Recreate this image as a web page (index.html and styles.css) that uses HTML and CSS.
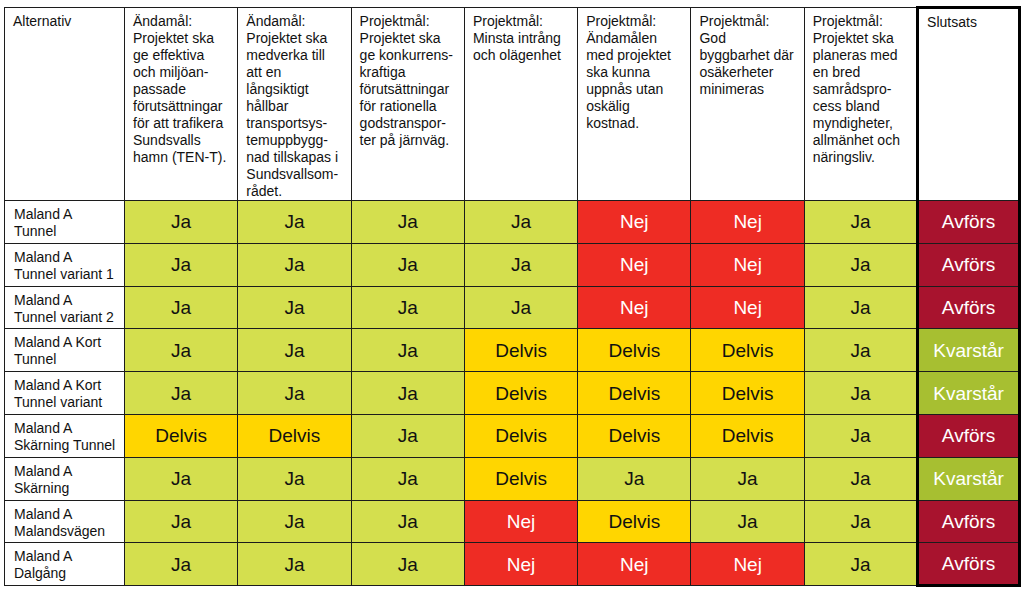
FILE: index.html
```html
<!DOCTYPE html>
<html lang="sv">
<head>
<meta charset="utf-8">
<title>Alternativ</title>
<link rel="stylesheet" href="styles.css">
</head>
<body>
<table class="grid">
  <colgroup>
    <col class="c-alt"><col class="c-m"><col class="c-m"><col class="c-m"><col class="c-m"><col class="c-m"><col class="c-m"><col class="c-m"><col class="c-end">
  </colgroup>
  <tr class="head">
    <th>Alternativ</th>
    <th>Ändamål:<br>Projektet ska<br>ge effektiva<br>och miljöan-<br>passade<br>förutsättningar<br>för att trafikera<br>Sundsvalls<br>hamn (TEN-T).</th>
    <th>Ändamål:<br>Projektet ska<br>medverka till<br>att en<br>långsiktigt<br>hållbar<br>transportsys-<br>temuppbygg-<br>nad tillskapas i<br>Sundsvallsom-<br>rådet.</th>
    <th>Projektmål:<br>Projektet ska<br>ge konkurrens-<br>kraftiga<br>förutsättningar<br>för rationella<br>godstranspor-<br>ter på järnväg.</th>
    <th>Projektmål:<br>Minsta intrång<br>och olägenhet</th>
    <th>Projektmål:<br>Ändamålen<br>med projektet<br>ska kunna<br>uppnås utan<br>oskälig<br>kostnad.</th>
    <th>Projektmål:<br>God<br>byggbarhet där<br>osäkerheter<br>minimeras</th>
    <th>Projektmål:<br>Projektet ska<br>planeras med<br>en bred<br>samrådspro-<br>cess bland<br>myndigheter,<br>allmänhet och<br>näringsliv.</th>
    <th class="end">Slutsats</th>
  </tr>
  <tr>
    <td class="lbl">Maland A<br>Tunnel</td>
    <td class="ja">Ja</td><td class="ja">Ja</td><td class="ja">Ja</td><td class="ja">Ja</td><td class="nej">Nej</td><td class="nej">Nej</td><td class="ja">Ja</td><td class="end avf">Avförs</td>
  </tr>
  <tr>
    <td class="lbl">Maland A<br>Tunnel variant 1</td>
    <td class="ja">Ja</td><td class="ja">Ja</td><td class="ja">Ja</td><td class="ja">Ja</td><td class="nej">Nej</td><td class="nej">Nej</td><td class="ja">Ja</td><td class="end avf">Avförs</td>
  </tr>
  <tr>
    <td class="lbl">Maland A<br>Tunnel variant 2</td>
    <td class="ja">Ja</td><td class="ja">Ja</td><td class="ja">Ja</td><td class="ja">Ja</td><td class="nej">Nej</td><td class="nej">Nej</td><td class="ja">Ja</td><td class="end avf">Avförs</td>
  </tr>
  <tr>
    <td class="lbl">Maland A Kort<br>Tunnel</td>
    <td class="ja">Ja</td><td class="ja">Ja</td><td class="ja">Ja</td><td class="del">Delvis</td><td class="del">Delvis</td><td class="del">Delvis</td><td class="ja">Ja</td><td class="end kv">Kvarstår</td>
  </tr>
  <tr>
    <td class="lbl">Maland A Kort<br>Tunnel variant</td>
    <td class="ja">Ja</td><td class="ja">Ja</td><td class="ja">Ja</td><td class="del">Delvis</td><td class="del">Delvis</td><td class="del">Delvis</td><td class="ja">Ja</td><td class="end kv">Kvarstår</td>
  </tr>
  <tr>
    <td class="lbl">Maland A<br>Skärning Tunnel</td>
    <td class="del">Delvis</td><td class="del">Delvis</td><td class="ja">Ja</td><td class="del">Delvis</td><td class="del">Delvis</td><td class="del">Delvis</td><td class="ja">Ja</td><td class="end avf">Avförs</td>
  </tr>
  <tr>
    <td class="lbl">Maland A<br>Skärning</td>
    <td class="ja">Ja</td><td class="ja">Ja</td><td class="ja">Ja</td><td class="del">Delvis</td><td class="ja">Ja</td><td class="ja">Ja</td><td class="ja">Ja</td><td class="end kv">Kvarstår</td>
  </tr>
  <tr>
    <td class="lbl">Maland A<br>Malandsvägen</td>
    <td class="ja">Ja</td><td class="ja">Ja</td><td class="ja">Ja</td><td class="nej">Nej</td><td class="del">Delvis</td><td class="ja">Ja</td><td class="ja">Ja</td><td class="end avf">Avförs</td>
  </tr>
  <tr class="last">
    <td class="lbl">Maland A<br>Dalgång</td>
    <td class="ja">Ja</td><td class="ja">Ja</td><td class="ja">Ja</td><td class="nej">Nej</td><td class="nej">Nej</td><td class="nej">Nej</td><td class="ja">Ja</td><td class="end avf">Avförs</td>
  </tr>
</table>
</body>
</html>
```
FILE: styles.css
```css
html, body {
  margin: 0;
  padding: 0;
  background: #ffffff;
}

body {
  padding: 6px 0 0 4px;
  font-family: "Liberation Sans", Arial, sans-serif;
  color: #111111;
}

.grid {
  border-collapse: collapse;
  table-layout: fixed;
  width: 1016px;
  border-left: 1px solid #3a3a3a;
}

.c-alt { width: 120px; }
.c-m { width: 113.3px; }
.c-end { width: 102px; }

.grid th,
.grid td {
  border: 1px solid #1c1c1c;
  padding: 0;
}

.head th {
  vertical-align: top;
  text-align: left;
  font-weight: normal;
  font-size: 14px;
  line-height: 17px;
  padding: 5px 2px 0 8px;
  white-space: nowrap;
}

.grid tr {
  height: 42.8px;
}

.grid tr.head {
  height: 192px;
}

.lbl {
  vertical-align: top;
  font-size: 14px;
  line-height: 17px;
  padding: 5px 2px 0 9px !important;
  white-space: nowrap;
}

.ja, .nej, .del, .avf, .kv {
  text-align: center;
  vertical-align: middle;
  font-size: 19px;
  line-height: 22px;
  padding-top: 1px !important;
}

.ja { background: #d4df4e; color: #111111; }
.nej { background: #ee2c24; color: #ffffff; }
.del { background: #ffd600; color: #111111; }
.avf { background: #a8132e; color: #ffffff; }
.kv { background: #a7bf31; color: #ffffff; }

.grid .end {
  border-left: 3px solid #000000;
  border-right: 3px solid #000000;
}

.grid th.end {
  border-top: 3px solid #000000;
}

.grid .last td.end {
  border-bottom: 3px solid #000000;
}
```
